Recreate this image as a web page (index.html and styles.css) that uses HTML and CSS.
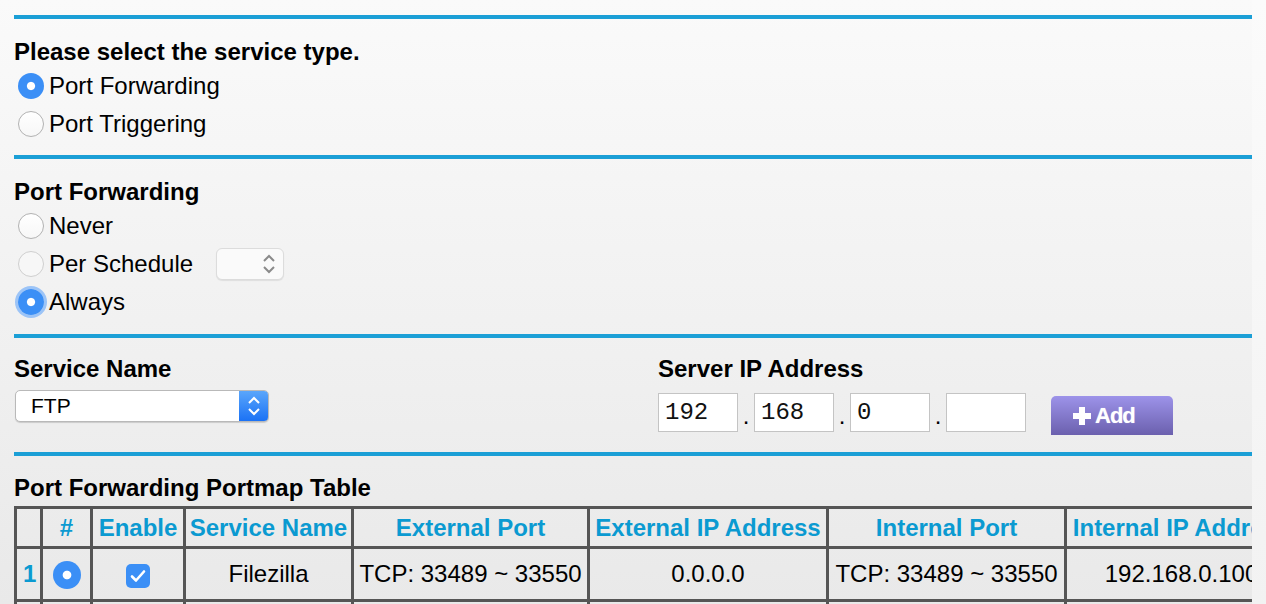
FILE: index.html
```html
<!DOCTYPE html>
<html lang="en">
  <head>
    <meta charset="UTF-8" />
    <meta name="viewport" content="width=device-width, initial-scale=1.0" />
    <title>Port Forwarding / Port Triggering</title>
    <link rel="stylesheet" href="styles.css">
  </head>
  <body>
    <div class="page">
      <!-- Тип сервиса -->
      <section class="block block-type">
        <h2>Please select the service type.</h2>
        <label class="option"><input type="radio" class="radio" name="svc" checked>Port Forwarding</label>
        <label class="option"><input type="radio" class="radio" name="svc">Port Triggering</label>
      </section>

      <!-- Расписание -->
      <section class="block block-schedule">
        <h2>Port Forwarding</h2>
        <label class="option"><input type="radio" class="radio" name="sched">Never</label>
        <label class="option">
          <input type="radio" class="radio radio-dim" name="sched">Per Schedule
          <span class="mini-select">
            <svg width="14" height="22" viewBox="0 0 14 22"><path d="M2 8 L7 3 L12 8 M2 14 L7 19 L12 14" fill="none" stroke="#8a8a8a" stroke-width="2"/></svg>
          </span>
        </label>
        <label class="option"><input type="radio" class="radio radio-focus" name="sched" checked>Always</label>
      </section>

      <!-- Имя сервиса и адрес сервера -->
      <section class="block block-service">
        <div class="field field-name">
          <h2>Service Name</h2>
          <div class="select">
            <span class="select-value">FTP</span>
            <span class="select-arrows">
              <svg width="14" height="22" viewBox="0 0 14 22"><path d="M2 8 L7 3 L12 8 M2 14 L7 19 L12 14" fill="none" stroke="#fff" stroke-width="2"/></svg>
            </span>
          </div>
        </div>
        <div class="field field-ip">
          <h2>Server IP Address</h2>
          <div class="ip-row">
            <input class="ip" type="text" value="192">
            <span class="dot">.</span>
            <input class="ip" type="text" value="168">
            <span class="dot">.</span>
            <input class="ip" type="text" value="0">
            <span class="dot">.</span>
            <input class="ip" type="text" value="">
            <button class="add-btn"><span class="plus"></span>Add</button>
          </div>
        </div>
      </section>

      <!-- Таблица правил -->
      <section class="block block-table">
        <h2>Port Forwarding Portmap Table</h2>
        <table class="portmap">
          <colgroup>
            <col class="c-num">
            <col class="c-sel">
            <col class="c-enable">
            <col class="c-name">
            <col class="c-port">
            <col class="c-ip">
            <col class="c-port2">
            <col class="c-ip2">
          </colgroup>
          <thead>
            <tr>
              <th></th>
              <th>#</th>
              <th>Enable</th>
              <th>Service Name</th>
              <th>External Port</th>
              <th>External IP Address</th>
              <th>Internal Port</th>
              <th>Internal IP Address</th>
            </tr>
          </thead>
          <tbody>
            <tr>
              <td class="idx">1</td>
              <td><span class="dot-radio"></span></td>
              <td>
                <span class="check">
                  <svg width="16" height="14" viewBox="0 0 16 14"><path d="M2 7.5 L6 11.5 L14 2.5" fill="none" stroke="#fff" stroke-width="2.6" stroke-linecap="round" stroke-linejoin="round"/></svg>
                </span>
              </td>
              <td>Filezilla</td>
              <td>TCP: 33489 ~ 33550</td>
              <td>0.0.0.0</td>
              <td>TCP: 33489 ~ 33550</td>
              <td>192.168.0.100</td>
            </tr>
            <tr class="empty">
              <td></td><td></td><td></td><td></td><td></td><td></td><td></td><td></td>
            </tr>
          </tbody>
        </table>
      </section>
    </div>
  </body>
</html>
```

FILE: styles.css
```css
body {
  margin: 0;
  background: linear-gradient(#fbfbfb, #f2f2f2);
  font-family: "Liberation Sans", Arial, Helvetica, sans-serif;
  color: #000;
}

.page {
  width: 1252px;
  height: 604px;
  padding-left: 14px;
  padding-top: 15px;
  box-sizing: border-box;
  overflow: hidden;
  background: linear-gradient(#fafafa, #e9e9e9);
}

.block {
  border-top: 4px solid #1b9fd6;
  padding: 19px 0 12px;
}

.block h2 {
  margin: 0 0 1px;
  font-size: 24px;
  line-height: 28px;
  font-weight: bold;
}

.option {
  display: flex;
  align-items: center;
  height: 38px;
  font-size: 24px;
}

/* Радиокнопки */
.radio {
  appearance: none;
  -webkit-appearance: none;
  width: 26px;
  height: 26px;
  margin: 0 5px 0 4px;
  border-radius: 50%;
  border: 1px solid #b2b2b2;
  background: linear-gradient(#ffffff, #f7f7f7);
  box-sizing: border-box;
}

.radio:checked {
  border: none;
  background: radial-gradient(circle, #fff 0 3.6px, #3b8ff6 4.6px);
}

.radio-dim {
  border-color: #cfcfcf;
  background: #f7f7f7;
}

.radio-focus {
  box-shadow: 0 0 0 3px #9cc4f7;
}

.mini-select {
  display: inline-flex;
  align-items: center;
  justify-content: flex-end;
  width: 68px;
  height: 32px;
  margin-left: 23px;
  padding-right: 7px;
  box-sizing: border-box;
  background: #fafafa;
  border: 1px solid #dcdcdc;
  border-radius: 6px;
  box-shadow: 0 1px 1px rgba(0, 0, 0, 0.08);
}

.block-schedule {
  padding-bottom: 13px;
}

/* Имя сервиса / IP */
.block-service {
  display: flex;
  padding: 17px 0 17px;
}

.field-name {
  width: 644px;
}

.select {
  display: flex;
  align-items: center;
  width: 254px;
  height: 32px;
  margin: 7px 0 0 1px;
  box-sizing: border-box;
  border: 1px solid #b9b9b9;
  border-radius: 5px;
  background: #fff;
  box-shadow: 0 1px 1px rgba(0, 0, 0, 0.15);
  overflow: hidden;
}

.select-value {
  flex: 1;
  padding-left: 15px;
  font-size: 21px;
}

.select-arrows {
  display: flex;
  align-items: center;
  justify-content: center;
  width: 29px;
  height: 100%;
  background: linear-gradient(#5aa6fb, #1b72f5);
}

.ip-row {
  display: flex;
  align-items: flex-start;
  margin-top: 10px;
}

.ip {
  width: 80px;
  height: 39px;
  box-sizing: border-box;
  border: 1px solid #c4c4c4;
  background: #fff;
  padding: 0 6px;
  font-family: "Liberation Mono", "Courier New", monospace;
  font-size: 24px;
  color: #111;
  outline: none;
}

.dot {
  width: 16px;
  padding-top: 7px;
  text-align: center;
  font-size: 24px;
  line-height: 32px;
}

.add-btn {
  display: flex;
  align-items: center;
  width: 122px;
  height: 39px;
  margin: 3px 0 0 25px;
  padding: 0 0 0 22px;
  border: none;
  border-radius: 5px 5px 0 0;
  background: linear-gradient(#9d93e9, #6b60ae);
  color: #fff;
  font-family: "Liberation Sans", Arial, sans-serif;
  font-size: 22px;
  font-weight: bold;
  letter-spacing: -1px;
  text-shadow: 0 0 1px rgba(255, 255, 255, 0.6);
}

.plus {
  position: relative;
  width: 18px;
  height: 18px;
  margin-right: 4px;
}

.plus::before,
.plus::after {
  content: "";
  position: absolute;
  background: #fff;
}

.plus::before {
  left: 0;
  top: 6px;
  width: 18px;
  height: 6px;
}

.plus::after {
  left: 6px;
  top: 0;
  width: 6px;
  height: 18px;
}

/* Таблица */
.block-table {
  padding-top: 18px;
}

.portmap {
  table-layout: fixed;
  border-collapse: collapse;
  width: 1282px;
  margin-top: 4px;
  font-size: 24px;
}

.c-num { width: 26px; }
.c-sel { width: 50px; }
.c-enable { width: 93px; }
.c-name { width: 168px; }
.c-port { width: 236px; }
.c-ip { width: 239px; }
.c-port2 { width: 238px; }
.c-ip2 { width: 232px; }

.portmap th,
.portmap td {
  border: 3px solid #555;
  padding: 0;
  text-align: center;
  white-space: nowrap;
  overflow: hidden;
}

.portmap th {
  height: 37px;
  color: #0b9ad1;
  font-weight: bold;
}

.portmap td {
  height: 50px;
}

.portmap td.idx {
  color: #0b9ad1;
  font-weight: bold;
  text-align: left;
  padding-left: 6px;
}

.dot-radio {
  display: inline-block;
  width: 28px;
  height: 28px;
  border-radius: 50%;
  vertical-align: middle;
  background: radial-gradient(circle, #fff 0 3.8px, #3b8ff6 4.8px);
}

.check {
  display: inline-flex;
  align-items: center;
  justify-content: center;
  width: 24px;
  height: 24px;
  border-radius: 5px;
  vertical-align: middle;
  background: #3b8ff6;
}
```
